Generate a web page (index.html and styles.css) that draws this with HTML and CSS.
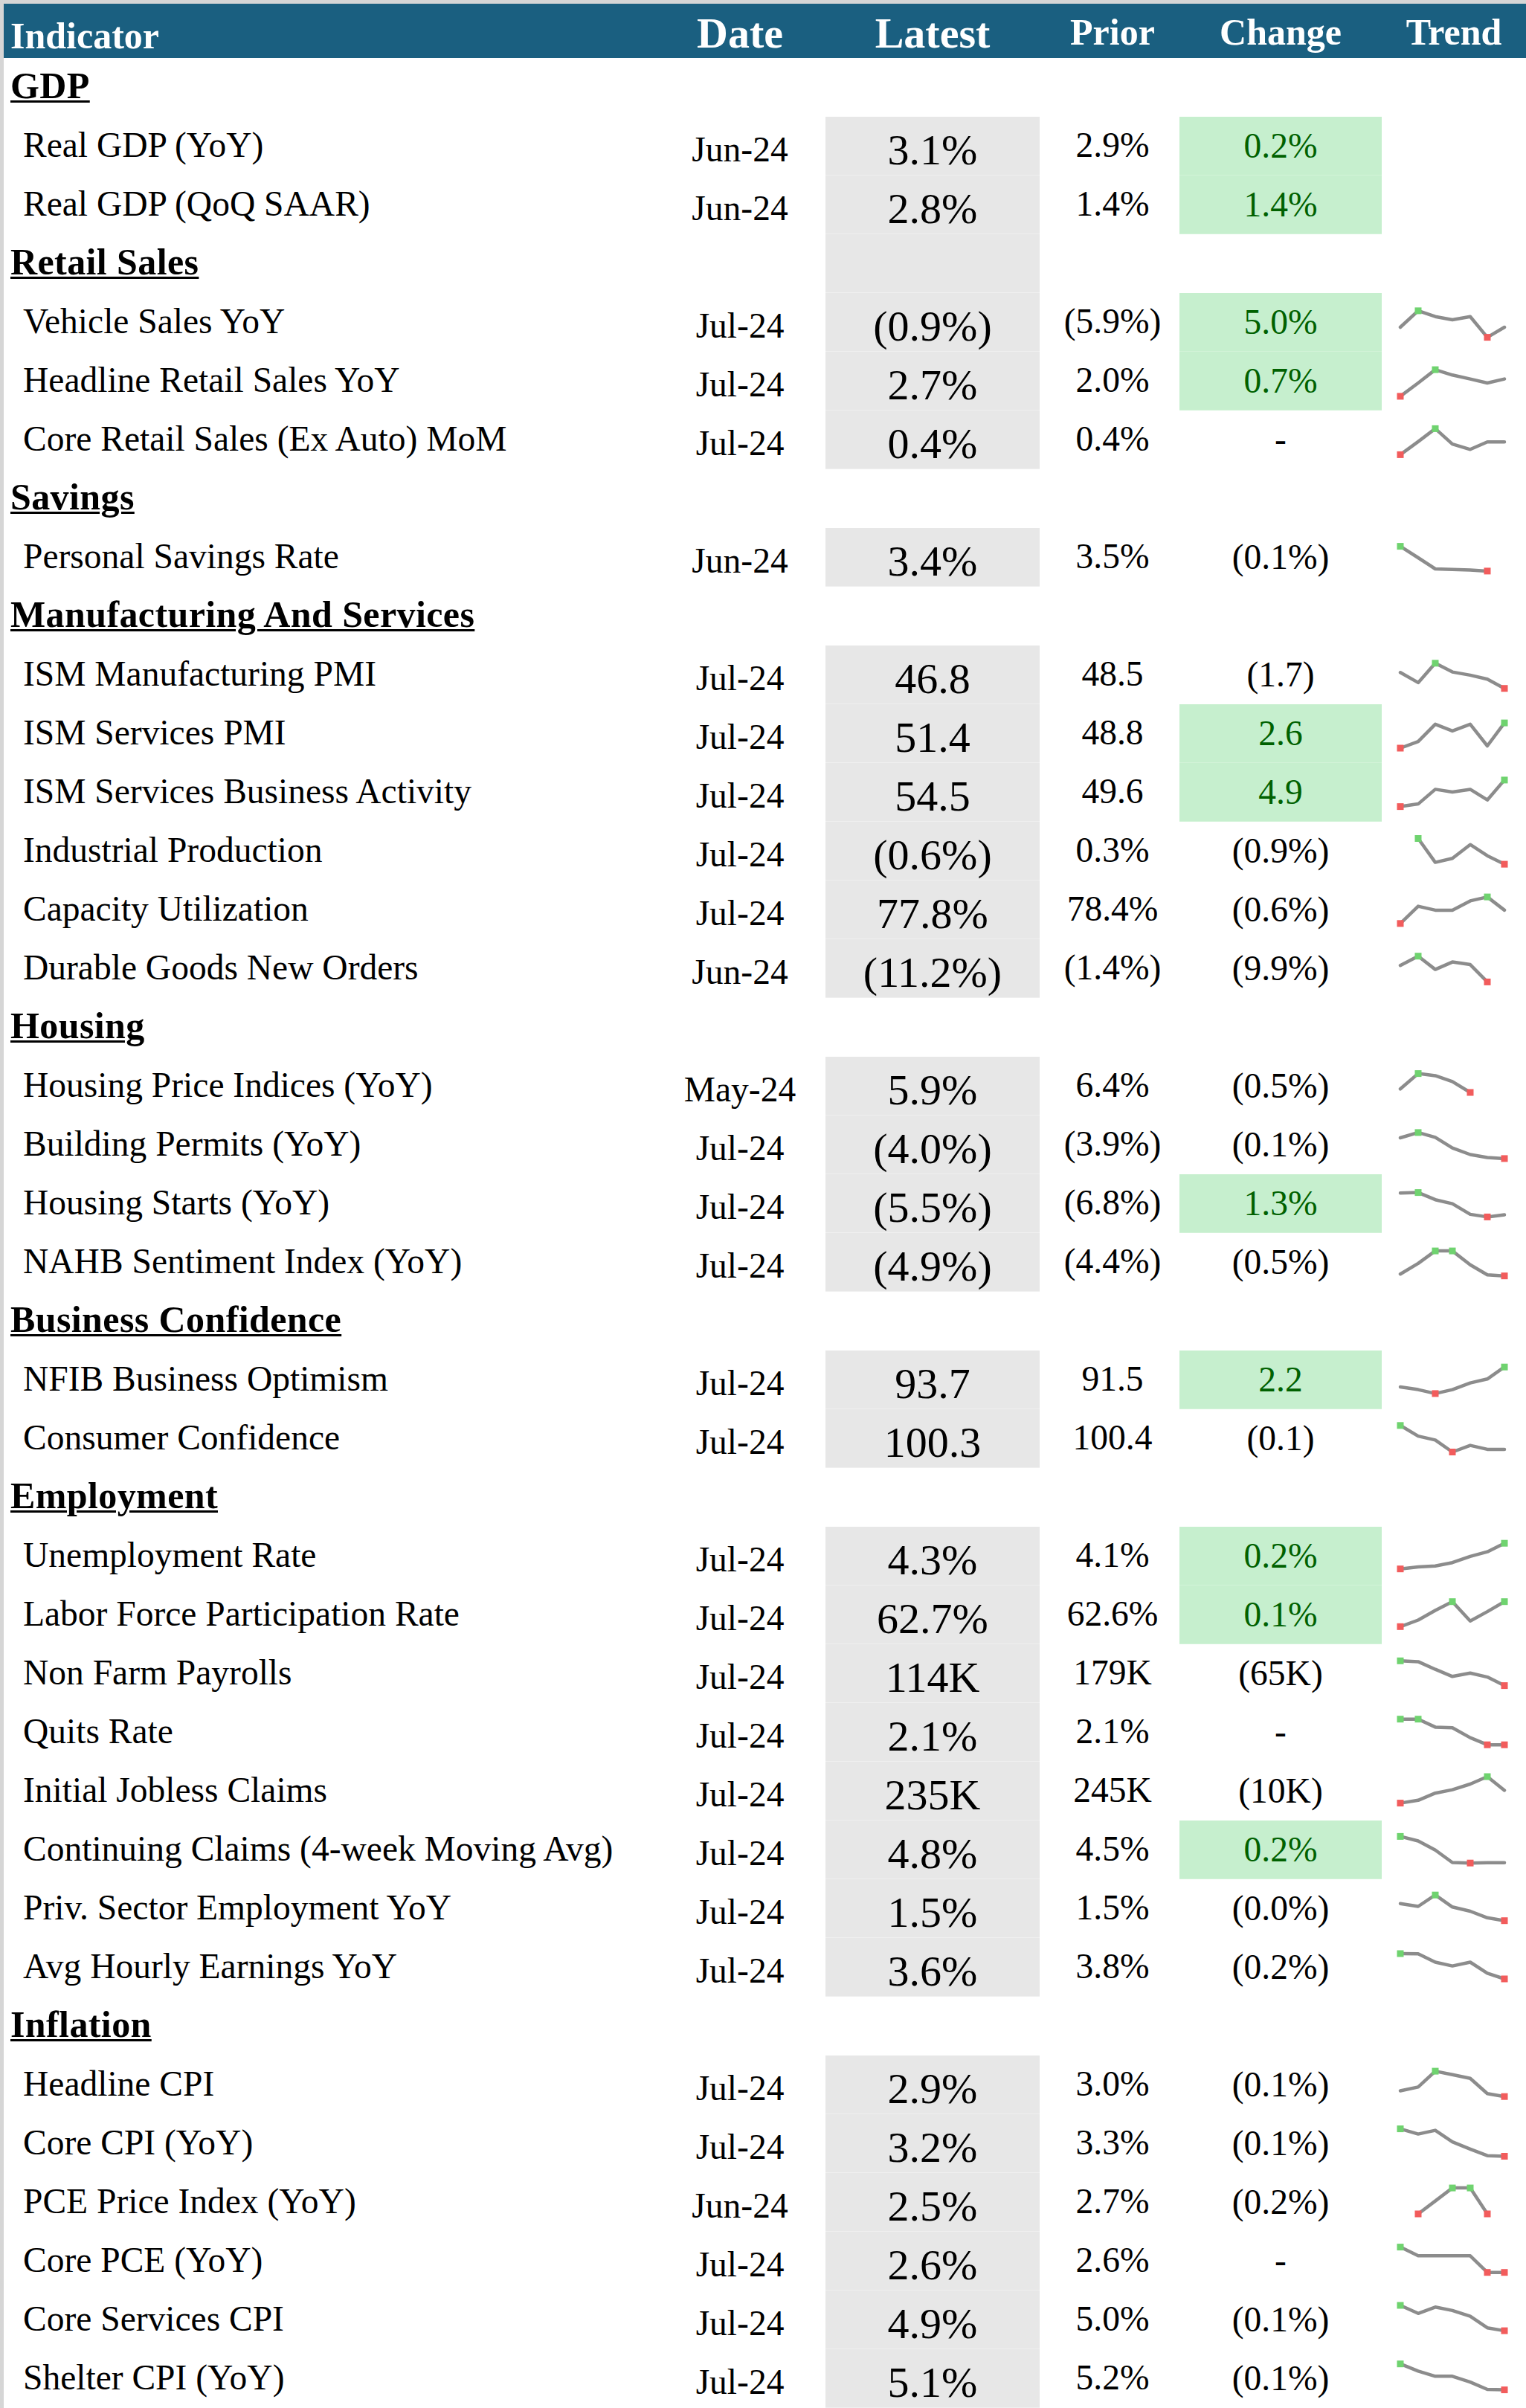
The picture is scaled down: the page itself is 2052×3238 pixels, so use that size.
FILE: index.html
```html
<!DOCTYPE html>
<html lang="en">
<head>
<meta charset="utf-8">
<title>Economic Indicators</title>
<link rel="stylesheet" href="styles.css">
</head>
<body>
<div class="sheet">
  <div class="hdr">
    <div class="h-ind">Indicator</div>
    <div class="h-date">Date</div>
    <div class="h-latest">Latest</div>
    <div class="h-prior">Prior</div>
    <div class="h-change">Change</div>
    <div class="h-trend">Trend</div>
  </div>

  <div class="row"><div class="sec"><span>GDP</span></div></div>
  <div class="row"><div class="lbl">Real GDP (YoY)</div><div class="date">Jun-24</div><div class="latest">3.1%</div><div class="prior">2.9%</div><div class="chg good">0.2%</div><div class="trend"></div></div>
  <div class="row"><div class="lbl">Real GDP (QoQ SAAR)</div><div class="date">Jun-24</div><div class="latest">2.8%</div><div class="prior">1.4%</div><div class="chg good">1.4%</div><div class="trend"></div></div>

  <div class="row"><div class="sec"><span>Retail Sales</span></div><div class="date"></div><div class="latest"></div></div>
  <div class="row"><div class="lbl">Vehicle Sales YoY</div><div class="date">Jul-24</div><div class="latest">(0.9%)</div><div class="prior">(5.9%)</div><div class="chg good">5.0%</div><div class="trend"><svg class="spark" viewBox="0 0 194 79"><polyline points="25,46 49,23.9 72,31.7 95,36 119,31.7 142,59.6 165,46"/><rect class="hi" x="44.5" y="19.4"/><rect class="lo" x="137.5" y="55.1"/></svg></div></div>
  <div class="row"><div class="lbl">Headline Retail Sales YoY</div><div class="date">Jul-24</div><div class="latest">2.7%</div><div class="prior">2.0%</div><div class="chg good">0.7%</div><div class="trend"><svg class="spark" viewBox="0 0 194 79"><polyline points="25,59.9 49,42 72,24.1 95,31.3 119,36.6 142,42 165,36.6"/><rect class="hi" x="67.5" y="19.6"/><rect class="lo" x="20.5" y="55.4"/></svg></div></div>
  <div class="row"><div class="lbl">Core Retail Sales (Ex Auto) MoM</div><div class="date">Jul-24</div><div class="latest">0.4%</div><div class="prior">0.4%</div><div class="chg">-</div><div class="trend"><svg class="spark" viewBox="0 0 194 79"><polyline points="25,59.4 49,41.9 72,24.4 95,45.1 119,52.3 142,42.3 165,42.3"/><rect class="hi" x="67.5" y="19.9"/><rect class="lo" x="20.5" y="54.9"/></svg></div></div>

  <div class="row"><div class="sec"><span>Savings</span></div></div>
  <div class="row"><div class="lbl">Personal Savings Rate</div><div class="date">Jun-24</div><div class="latest">3.4%</div><div class="prior">3.5%</div><div class="chg">(0.1%)</div><div class="trend"><svg class="spark" viewBox="0 0 194 79"><polyline points="25,24.6 49,40 72,55 95,55.7 119,56.4 142,57.9"/><rect class="hi" x="20.5" y="20.1"/><rect class="lo" x="137.5" y="53.4"/></svg></div></div>

  <div class="row"><div class="sec"><span>Manufacturing And Services</span></div></div>
  <div class="row"><div class="lbl">ISM Manufacturing PMI</div><div class="date">Jul-24</div><div class="latest">46.8</div><div class="prior">48.5</div><div class="chg">(1.7)</div><div class="trend"><svg class="spark" viewBox="0 0 194 79"><polyline points="25,36.3 49,49.9 72,23.8 95,35.6 119,39.9 142,45.2 165,57.7"/><rect class="hi" x="67.5" y="19.3"/><rect class="lo" x="160.5" y="53.2"/></svg></div></div>
  <div class="row"><div class="lbl">ISM Services PMI</div><div class="date">Jul-24</div><div class="latest">51.4</div><div class="prior">48.8</div><div class="chg good">2.6</div><div class="trend"><svg class="spark" viewBox="0 0 194 79"><polyline points="25,59 49,50.1 72,26.9 95,35.9 119,26.9 142,56 165,25.1"/><rect class="hi" x="160.5" y="20.6"/><rect class="lo" x="20.5" y="54.5"/></svg></div></div>
  <div class="row"><div class="lbl">ISM Services Business Activity</div><div class="date">Jul-24</div><div class="latest">54.5</div><div class="prior">49.6</div><div class="chg good">4.9</div><div class="trend"><svg class="spark" viewBox="0 0 194 79"><polyline points="25,58.6 49,55.1 72,35.4 95,39 119,35.4 142,49.7 165,22.9"/><rect class="hi" x="160.5" y="18.4"/><rect class="lo" x="20.5" y="54.1"/></svg></div></div>
  <div class="row"><div class="lbl">Industrial Production</div><div class="date">Jul-24</div><div class="latest">(0.6%)</div><div class="prior">0.3%</div><div class="chg">(0.9%)</div><div class="trend"><svg class="spark" viewBox="0 0 194 79"><polyline points="49,22.5 72,54.6 95,49.3 119,30.7 142,45.7 165,57.1"/><rect class="hi" x="44.5" y="18"/><rect class="lo" x="160.5" y="52.6"/></svg></div></div>
  <div class="row"><div class="lbl">Capacity Utilization</div><div class="date">Jul-24</div><div class="latest">77.8%</div><div class="prior">78.4%</div><div class="chg">(0.6%)</div><div class="trend"><svg class="spark" viewBox="0 0 194 79"><polyline points="25,57.8 49,34.6 72,39.9 95,39.9 119,27.4 142,22.1 165,39.9"/><rect class="hi" x="137.5" y="17.6"/><rect class="lo" x="20.5" y="53.3"/></svg></div></div>
  <div class="row"><div class="lbl">Durable Goods New Orders</div><div class="date">Jun-24</div><div class="latest">(11.2%)</div><div class="prior">(1.4%)</div><div class="chg">(9.9%)</div><div class="trend"><svg class="spark" viewBox="0 0 194 79"><polyline points="25,35.2 49,22.7 72,40.6 95,30.6 119,34.1 142,57.4"/><rect class="hi" x="44.5" y="18.2"/><rect class="lo" x="137.5" y="52.9"/></svg></div></div>

  <div class="row"><div class="sec"><span>Housing</span></div></div>
  <div class="row"><div class="lbl">Housing Price Indices (YoY)</div><div class="date">May-24</div><div class="latest">5.9%</div><div class="prior">6.4%</div><div class="chg">(0.5%)</div><div class="trend"><svg class="spark" viewBox="0 0 194 79"><polyline points="25,43.3 49,22.6 72,25.4 95,33.3 119,48"/><rect class="hi" x="44.5" y="18.1"/><rect class="lo" x="114.5" y="43.5"/></svg></div></div>
  <div class="row"><div class="lbl">Building Permits (YoY)</div><div class="date">Jul-24</div><div class="latest">(4.0%)</div><div class="prior">(3.9%)</div><div class="chg">(0.1%)</div><div class="trend"><svg class="spark" viewBox="0 0 194 79"><polyline points="25,30 49,22.9 72,29.3 95,43.6 119,52.5 142,56.5 165,57.9"/><rect class="hi" x="44.5" y="18.4"/><rect class="lo" x="160.5" y="53.4"/></svg></div></div>
  <div class="row"><div class="lbl">Housing Starts (YoY)</div><div class="date">Jul-24</div><div class="latest">(5.5%)</div><div class="prior">(6.8%)</div><div class="chg good">1.3%</div><div class="trend"><svg class="spark" viewBox="0 0 194 79"><polyline points="25,25.3 49,24.6 72,34.2 95,39.6 119,53.9 142,57.4 165,54.6"/><rect class="hi" x="44.5" y="20.1"/><rect class="lo" x="137.5" y="52.9"/></svg></div></div>
  <div class="row"><div class="lbl">NAHB Sentiment Index (YoY)</div><div class="date">Jul-24</div><div class="latest">(4.9%)</div><div class="prior">(4.4%)</div><div class="chg">(0.5%)</div><div class="trend"><svg class="spark" viewBox="0 0 194 79"><polyline points="25,55.2 49,40.9 72,24.1 95,24.1 119,42.7 142,56.3 165,57.7"/><rect class="hi" x="67.5" y="19.6"/><rect class="hi" x="90.5" y="19.6"/><rect class="lo" x="160.5" y="53.2"/></svg></div></div>

  <div class="row"><div class="sec"><span>Business Confidence</span></div></div>
  <div class="row"><div class="lbl">NFIB Business Optimism</div><div class="date">Jul-24</div><div class="latest">93.7</div><div class="prior">91.5</div><div class="chg good">2.2</div><div class="trend"><svg class="spark" viewBox="0 0 194 79"><polyline points="25,49 49,52.6 72,57.9 95,52.6 119,43.6 142,38.3 165,22.2"/><rect class="hi" x="160.5" y="17.7"/><rect class="lo" x="67.5" y="53.4"/></svg></div></div>
  <div class="row"><div class="lbl">Consumer Confidence</div><div class="date">Jul-24</div><div class="latest">100.3</div><div class="prior">100.4</div><div class="chg">(0.1)</div><div class="trend"><svg class="spark" viewBox="0 0 194 79"><polyline points="25,21.8 49,36.1 72,41.4 95,57.5 119,48.6 142,53.9 165,53.9"/><rect class="hi" x="20.5" y="17.3"/><rect class="lo" x="90.5" y="53"/></svg></div></div>

  <div class="row"><div class="sec"><span>Employment</span></div></div>
  <div class="row"><div class="lbl">Unemployment Rate</div><div class="date">Jul-24</div><div class="latest">4.3%</div><div class="prior">4.1%</div><div class="chg good">0.2%</div><div class="trend"><svg class="spark" viewBox="0 0 194 79"><polyline points="25,56.7 49,54 72,52.8 95,48.2 119,39.8 142,33.7 165,22.2"/><rect class="hi" x="160.5" y="17.7"/><rect class="lo" x="20.5" y="52.2"/></svg></div></div>
  <div class="row"><div class="lbl">Labor Force Participation Rate</div><div class="date">Jul-24</div><div class="latest">62.7%</div><div class="prior">62.6%</div><div class="chg good">0.1%</div><div class="trend"><svg class="spark" viewBox="0 0 194 79"><polyline points="25,55.3 49,46.5 72,33.5 95,21.7 119,47.7 142,35.1 165,21.7"/><rect class="hi" x="90.5" y="17.2"/><rect class="hi" x="160.5" y="17.2"/><rect class="lo" x="20.5" y="50.8"/></svg></div></div>
  <div class="row"><div class="lbl">Non Farm Payrolls</div><div class="date">Jul-24</div><div class="latest">114K</div><div class="prior">179K</div><div class="chg">(65K)</div><div class="trend"><svg class="spark" viewBox="0 0 194 79"><polyline points="25,22.3 49,23.4 72,33.7 95,43.3 119,38.7 142,44.1 165,55.6"/><rect class="hi" x="20.5" y="17.8"/><rect class="lo" x="160.5" y="51.1"/></svg></div></div>
  <div class="row"><div class="lbl">Quits Rate</div><div class="date">Jul-24</div><div class="latest">2.1%</div><div class="prior">2.1%</div><div class="chg">-</div><div class="trend"><svg class="spark" viewBox="0 0 194 79"><polyline points="25,21.7 49,21.7 72,32.4 95,33.2 119,46.6 142,56.2 165,56.2"/><rect class="hi" x="20.5" y="17.2"/><rect class="hi" x="44.5" y="17.2"/><rect class="lo" x="137.5" y="51.7"/><rect class="lo" x="160.5" y="51.7"/></svg></div></div>
  <div class="row"><div class="lbl">Initial Jobless Claims</div><div class="date">Jul-24</div><div class="latest">235K</div><div class="prior">245K</div><div class="chg">(10K)</div><div class="trend"><svg class="spark" viewBox="0 0 194 79"><polyline points="25,55.6 49,51.8 72,42.2 95,37.6 119,30 142,20 165,38.4"/><rect class="hi" x="137.5" y="15.5"/><rect class="lo" x="20.5" y="51.1"/></svg></div></div>
  <div class="row"><div class="lbl">Continuing Claims (4-week Moving Avg)</div><div class="date">Jul-24</div><div class="latest">4.8%</div><div class="prior">4.5%</div><div class="chg good">0.2%</div><div class="trend"><svg class="spark" viewBox="0 0 194 79"><polyline points="25,21.4 49,27.5 72,39.8 95,56.5 119,57.2 142,56.8 165,56.8"/><rect class="hi" x="20.5" y="16.9"/><rect class="lo" x="114.5" y="52.7"/></svg></div></div>
  <div class="row"><div class="lbl">Priv. Sector Employment YoY</div><div class="date">Jul-24</div><div class="latest">1.5%</div><div class="prior">1.5%</div><div class="chg">(0.0%)</div><div class="trend"><svg class="spark" viewBox="0 0 194 79"><polyline points="25,32.7 49,36.5 72,21.2 95,37.3 119,43 142,51.8 165,55.7"/><rect class="hi" x="67.5" y="16.7"/><rect class="lo" x="160.5" y="51.2"/></svg></div></div>
  <div class="row"><div class="lbl">Avg Hourly Earnings YoY</div><div class="date">Jul-24</div><div class="latest">3.6%</div><div class="prior">3.8%</div><div class="chg">(0.2%)</div><div class="trend"><svg class="spark" viewBox="0 0 194 79"><polyline points="25,21 49,21.2 72,32.5 95,37.6 119,32.5 142,47.3 165,55"/><rect class="hi" x="20.5" y="16.5"/><rect class="lo" x="160.5" y="50.5"/></svg></div></div>

  <div class="row"><div class="sec"><span>Inflation</span></div></div>
  <div class="row"><div class="lbl">Headline CPI</div><div class="date">Jul-24</div><div class="latest">2.9%</div><div class="prior">3.0%</div><div class="chg">(0.1%)</div><div class="trend"><svg class="spark" viewBox="0 0 194 79"><polyline points="25,47.5 49,42.4 72,21.1 95,25.8 119,30.8 142,51.3 165,55.2"/><rect class="hi" x="67.5" y="16.6"/><rect class="lo" x="160.5" y="50.7"/></svg></div></div>
  <div class="row"><div class="lbl">Core CPI (YoY)</div><div class="date">Jul-24</div><div class="latest">3.2%</div><div class="prior">3.3%</div><div class="chg">(0.1%)</div><div class="trend"><svg class="spark" viewBox="0 0 194 79"><polyline points="25,19.6 49,26.6 72,21.6 95,37.1 119,46.8 142,55.7 165,56.5"/><rect class="hi" x="20.5" y="15.1"/><rect class="lo" x="160.5" y="52"/></svg></div></div>
  <div class="row"><div class="lbl">PCE Price Index (YoY)</div><div class="date">Jun-24</div><div class="latest">2.5%</div><div class="prior">2.7%</div><div class="chg">(0.2%)</div><div class="trend"><svg class="spark" viewBox="0 0 194 79"><polyline points="49,55 72,37.6 95,20.1 119,20.1 142,55"/><rect class="hi" x="90.5" y="15.6"/><rect class="hi" x="114.5" y="15.6"/><rect class="lo" x="44.5" y="50.5"/><rect class="lo" x="137.5" y="50.5"/></svg></div></div>
  <div class="row"><div class="lbl">Core PCE (YoY)</div><div class="date">Jul-24</div><div class="latest">2.6%</div><div class="prior">2.6%</div><div class="chg">-</div><div class="trend"><svg class="spark" viewBox="0 0 194 79"><polyline points="25,20.6 49,32.3 72,32.3 95,32.3 119,32.3 142,54.7 165,54.7"/><rect class="hi" x="20.5" y="16.1"/><rect class="lo" x="137.5" y="50.2"/><rect class="lo" x="160.5" y="50.2"/></svg></div></div>
  <div class="row"><div class="lbl">Core Services CPI</div><div class="date">Jul-24</div><div class="latest">4.9%</div><div class="prior">5.0%</div><div class="chg">(0.1%)</div><div class="trend"><svg class="spark" viewBox="0 0 194 79"><polyline points="25,20 49,30.8 72,22.3 95,26.9 119,34.7 142,50.2 165,54.1"/><rect class="hi" x="20.5" y="15.5"/><rect class="lo" x="160.5" y="49.6"/></svg></div></div>
  <div class="row"><div class="lbl">Shelter CPI (YoY)</div><div class="date">Jul-24</div><div class="latest">5.1%</div><div class="prior">5.2%</div><div class="chg">(0.1%)</div><div class="trend"><svg class="spark" viewBox="0 0 194 79"><polyline points="25,19.7 49,29.4 72,36.3 95,36.3 119,44.1 142,54 165,54.6"/><rect class="hi" x="20.5" y="15.2"/><rect class="lo" x="160.5" y="50.1"/></svg></div></div>
</div>
</body>
</html>
```

FILE: styles.css
```css
html, body {
  margin: 0;
  padding: 0;
}

body {
  background: #d6d6d6;
  font-family: "Liberation Serif", "Times New Roman", serif;
  color: #000;
}

.sheet {
  margin: 5px 0 0 5px;
  width: 2047px;
  background: #fff;
}

.hdr,
.row {
  display: grid;
  grid-template-columns: 890px 215px 288px 188px 272px 194px;
  line-height: 1;
}

.hdr {
  height: 73px;
  background: #1a5f80;
  color: #fff;
  font-weight: bold;
}

.h-ind {
  font-size: 50px;
  padding: 18px 0 0 9px;
}

.h-date {
  font-size: 58px;
  padding: 11px 15px 0 0;
  text-align: center;
}

.h-latest {
  font-size: 58px;
  padding-top: 11px;
  text-align: center;
}

.h-prior {
  font-size: 50px;
  padding: 13px 0 0 8px;
  text-align: center;
}

.h-change,
.h-trend {
  font-size: 50px;
  padding-top: 13px;
  text-align: center;
}

.row {
  height: 79px;
}

.sec {
  font-size: 50px;
  font-weight: bold;
  letter-spacing: 0.4px;
  padding: 12px 0 0 9px;
  white-space: nowrap;
}

.sec span {
  text-decoration: underline;
  text-decoration-thickness: 3px;
  text-underline-offset: 3px;
}

.lbl {
  font-size: 47.5px;
  padding: 15px 0 0 26px;
  white-space: nowrap;
}

.date {
  font-size: 47.5px;
  padding: 20.5px 15px 0 0;
  text-align: center;
}

.latest {
  font-size: 58px;
  padding-top: 16px;
  text-align: center;
  background: #e7e7e7;
  box-shadow: inset 0 -1px 0 #efefef;
}

.prior {
  font-size: 47.5px;
  padding: 15px 0 0 8px;
  text-align: center;
}

.chg {
  font-size: 47.5px;
  padding-top: 15.5px;
  text-align: center;
}

.chg.good {
  background: #c6efce;
  color: #006100;
  box-shadow: inset 0 -1px 0 #d2f3d8;
}

.trend {
  position: relative;
}

.spark {
  display: block;
  width: 194px;
  height: 79px;
  filter: blur(0.6px);
}

.spark polyline {
  fill: none;
  stroke: #8c8c8c;
  stroke-width: 4.5;
  stroke-linejoin: round;
  stroke-linecap: round;
}

.spark rect {
  width: 9px;
  height: 9px;
}

.spark .hi {
  fill: #6fd36f;
}

.spark .lo {
  fill: #f25c5c;
}
```
